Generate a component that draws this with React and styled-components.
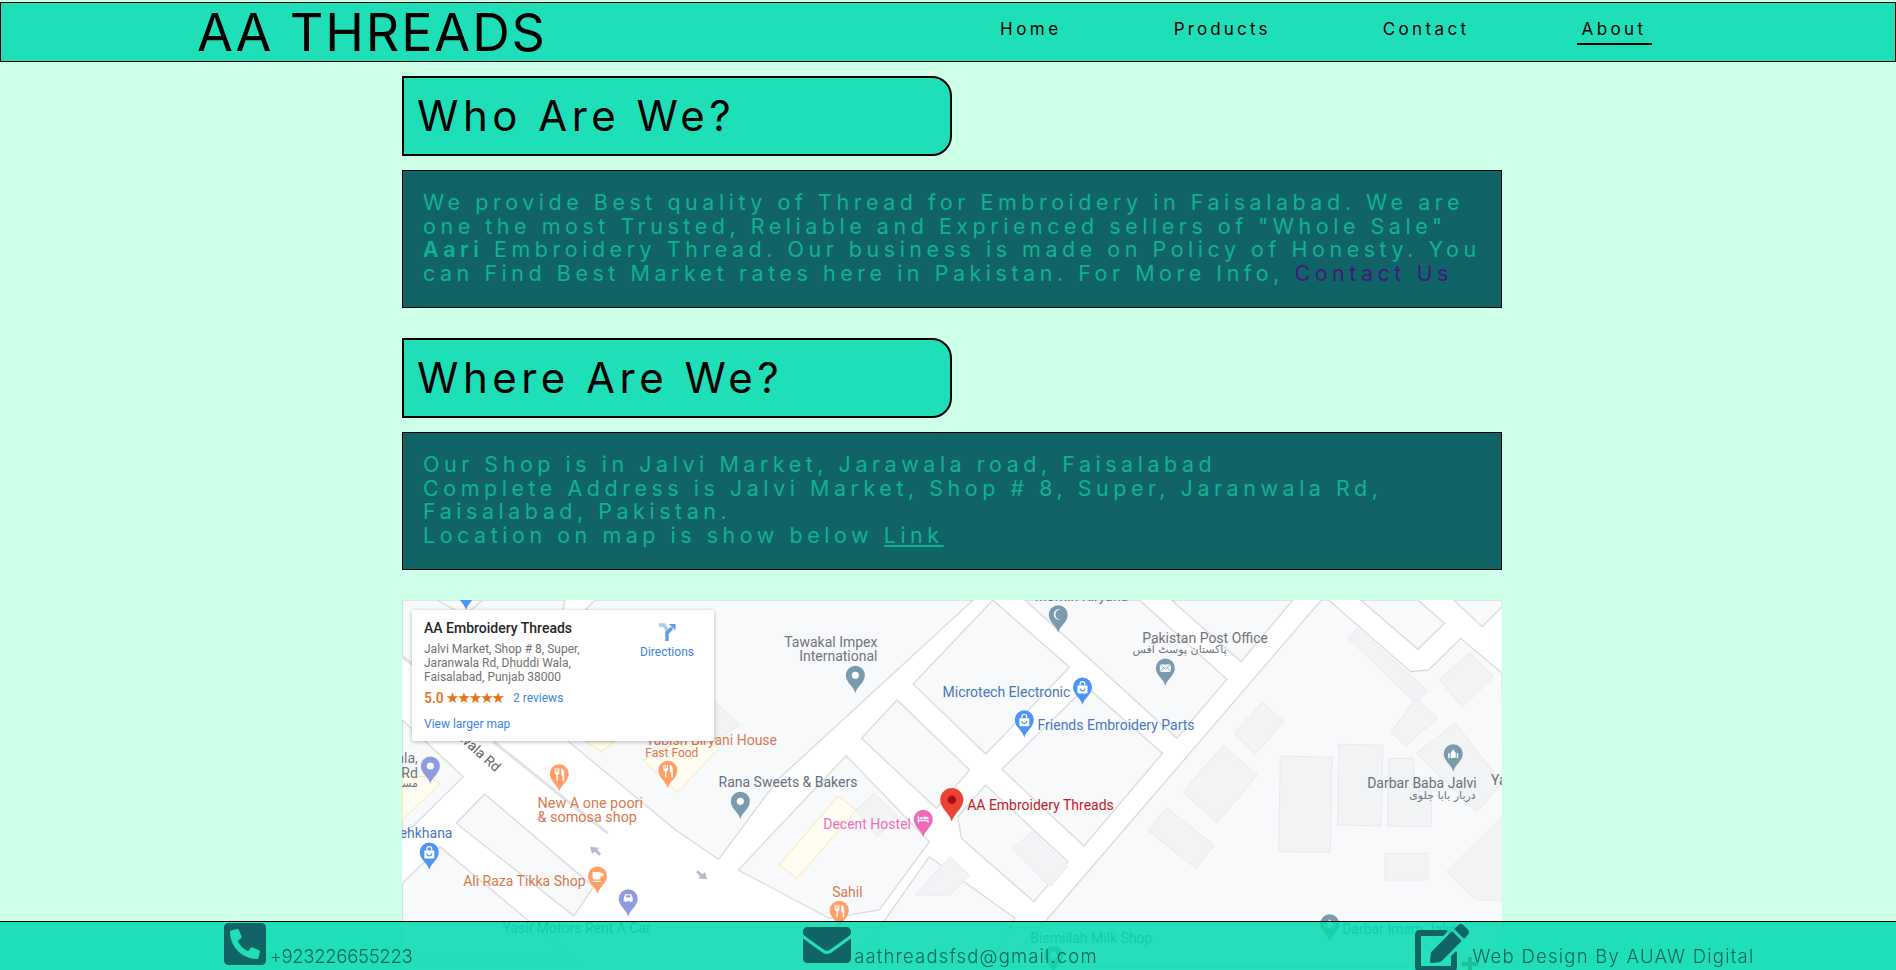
import React from "react";
import styled, { createGlobalStyle } from "styled-components";
import { FaPhoneSquareAlt, FaEnvelope, FaEdit } from "react-icons/fa";

const Global = createGlobalStyle`
  html, body { margin: 0; padding: 0; height: 100%; overflow: hidden; background: #ceffe9; }
  body { font-family: Inter, "Liberation Sans", sans-serif; }
  * { box-sizing: border-box; }
`;

const Header = styled.header`
  margin-top: 2px;
  height: 60px;
  display: flex;
  align-items: flex-start;
  background: #1fdfb8;
  border: 1px solid #000;
`;
const Logo = styled.div`
  width: 994px;
  padding-left: 196px;
  font-size: 52px;
  line-height: 50px;
  padding-top: 5px;
  letter-spacing: 1.9px;
  color: #000;
  white-space: nowrap;
`;
const Nav = styled.nav`
  display: flex;
  gap: 102px;
  padding-top: 14px;
`;
const NavItem = styled.a`
  padding: 0 5px 2px;
  font-size: 17px;
  line-height: 24px;
  letter-spacing: ${(p) => p.$ls}px;
  color: #000;
  white-space: nowrap;
  border-bottom: 2px solid ${(p) => (p.$active ? "#000" : "transparent")};
`;
const Main = styled.main`
  width: 1100px;
  margin-left: 402px;
`;
const Heading = styled.h1`
  margin: ${(p) => p.$top}px 0 14px;
  width: 550px;
  height: 80px;
  padding: 0 0 2px 13px;
  display: flex;
  align-items: center;
  background: #1fdfb8;
  border: 2px solid #000;
  border-radius: 0 20px 20px 0;
  font-size: 42px;
  font-weight: 400;
  letter-spacing: 4.5px;
  color: #000;
`;
const Para = styled.p`
  margin: 0;
  height: 138px;
  padding: 20px;
  background: #116466;
  border: 1px solid #000;
  font-size: 21.5px;
  line-height: 23.7px;
  letter-spacing: 4.52px;
  color: #11b193;
  white-space: nowrap;
`;
const Strong = styled.b`
  font-weight: 600;
`;
const ContactLink = styled.a`
  color: #3f1a7e;
`;
const PlainLink = styled.a`
  color: inherit;
  text-decoration: underline;
`;
const MapFrame = styled.div`
  position: relative;
  margin-top: 30px;
  width: 1100px;
  height: 400px;
  overflow: hidden;
  background: #fff;
  font-family: Roboto, sans-serif;
`;
const MapArt = styled.svg`
  display: block;
  width: 1100px;
  height: 400px;
`;
const Card = styled.div`
  position: absolute;
  left: 10px;
  top: 10px;
  width: 302px;
  height: 131px;
  padding: 10px 12px;
  background: #fff;
  border-radius: 2px;
  box-shadow: 0 1px 4px rgba(0, 0, 0, 0.28);
  display: grid;
  grid-template-columns: 1fr 70px;
`;
const CardTitle = styled.div`
  font-size: 14px;
  font-weight: 500;
  line-height: 17px;
  color: #262626;
`;
const CardAddress = styled.div`
  margin-top: 5px;
  font-size: 12px;
  line-height: 14px;
  color: #717171;
`;
const Rating = styled.div`
  margin-top: 5px;
  display: flex;
  align-items: center;
  gap: 2px;
  height: 18px;
  font-size: 14px;
  font-weight: 500;
  color: #e7711b;
`;
const Stars = styled.span`
  font-size: 15px;
  letter-spacing: -2px;
  margin-right: 1px;
  font-family: "DejaVu Sans", sans-serif;
`;
const CardLink = styled.a`
  font-size: 12px;
  font-weight: 400;
  color: #3a84df;
  margin-left: ${(p) => p.$ml || 0}px;
`;
const LargerMap = styled.div`
  margin-top: 9px;
  line-height: 14px;
`;
const Directions = styled.div`
  display: flex;
  flex-direction: column;
  align-items: center;
  gap: 3px;
  font-size: 12px;
  color: #3a84df;
  padding-top: 3px;
`;
const Footer = styled.footer`
  position: fixed;
  left: 0;
  right: 0;
  bottom: 0;
  height: 49px;
  display: grid;
  grid-template-columns: repeat(3, 1fr);
  background: rgba(5, 218, 175, 0.87);
  border-top: 1px solid #000;
  color: #116466;
`;
const FooterCell = styled.div`
  position: relative;
  display: flex;
  justify-content: center;
  align-items: flex-end;
  gap: ${(p) => p.$gap}px;
  padding-left: ${(p) => p.$pl || 0}px;
  height: 48px;
  font-size: 18.5px;
  font-weight: 300;
  line-height: 24px;
  white-space: nowrap;
`;
const FooterIcon = styled.span`
  display: flex;
  color: #116466;
  font-size: ${(p) => p.$size}px;
  margin-bottom: ${(p) => p.$mb}px;
  height: ${(p) => p.$size}px;
`;
const FooterText = styled.span`
  letter-spacing: ${(p) => p.$ls}px;
  margin-bottom: 2px;
`;
const Plus = styled.span`
  position: absolute;
  left: 198px;
  bottom: -1px;
  width: 16px;
  height: 14px;
  background:
    linear-gradient(#1cbf93, #1cbf93) center / 16px 4px no-repeat,
    linear-gradient(#1cbf93, #1cbf93) center / 4px 14px no-repeat;
`;

const X = (z) => z / 2.8 - 12;
const Y = (z) => z / 3 - 10;
const pts = (a) => a.map(([x, y]) => `${X(x).toFixed(1)},${Y(y).toFixed(1)}`).join(" ");

const BLOCKS = [
  [[575, 30], [470, 140], [500, 455], [800, 720], [920, 808], [1085, 570], [1633, 30]],
  [[1688, 30], [1903, 232], [1668, 492], [1465, 282]],
  [[1713, 538], [1950, 290], [2163, 490], [1943, 768]],
  [[1778, 30], [2203, 445], [2343, 268], [2098, 30]],
  [[2188, 30], [2383, 215], [2528, 30]],
  [[1420, 330], [1320, 445], [1530, 655], [1623, 540]],
  [[35, 390], [205, 560], [35, 740]],
  [[265, 612], [570, 890], [515, 978], [185, 700]],
  [[35, 880], [140, 770], [520, 1110], [35, 1110]],
  [[1277, 497], [975, 840], [1230, 985], [1370, 960], [1510, 755]],
  [[1668, 585], [1898, 815], [1803, 935], [1600, 745], [1590, 680]],
  [[1510, 800], [1750, 985], [1680, 1120], [1300, 1120]],
  [[35, 30], [35, 200], [300, 440], [470, 440], [470, 140], [490, 30]],
  [[2608, 30], [1838, 990], [1720, 1130], [3120, 1130], [3114, 250], [2998, 145], [2908, 240], [2858, 245], [2628, 30]],
  [[2718, 30], [2878, 178], [2953, 100], [2878, 30]],
  [[2978, 30], [3058, 110], [3114, 50], [3114, 30]],
  [[130, 30], [210, 75], [260, 30]],
];
const HOUSES = [
  [[2493, 498], [2638, 502], [2633, 787], [2488, 785]],
  [[2656, 463], [2780, 466], [2776, 708], [2653, 705]],
  [[2796, 505], [2866, 505], [2868, 555], [2916, 600], [2916, 710], [2793, 708]],
  [[2786, 790], [2906, 790], [2906, 870], [2786, 870]],
  [[2443, 337], [2503, 395], [2423, 492], [2363, 430]],
  [[2333, 467], [2428, 555], [2316, 698], [2220, 605]],
  [[2173, 653], [2308, 765], [2256, 835], [2123, 722]],
  [[2683, 145], [2708, 115], [2906, 303], [2873, 340]],
  [[2803, 425], [2873, 325], [2933, 385], [2843, 467]],
  [[2938, 270], [3023, 188], [3090, 260], [3003, 350]],
  [[2983, 400], [2873, 490], [3043, 665], [3114, 580]],
  [[2958, 845], [3114, 680], [3114, 930], [3040, 930]],
  [[1305, 660], [1355, 610], [1420, 675], [1365, 740]],
  [[1743, 775], [1800, 725], [1898, 830], [1848, 890]],
  [[1470, 915], [1568, 800], [1623, 855], [1568, 915]],
  [[905, 330], [980, 405], [905, 455]],
];
const YELLOW = [
  [[708, 510], [805, 607], [920, 475], [850, 430]],
  [[1090, 825], [1140, 865], [1305, 660], [1255, 618]],
  [[550, 455], [592, 485], [630, 455]],
  [[35, 560], [105, 560], [140, 580], [35, 690]],
];
const LABELS = [
  ["Tawakal Impex", 1365, 170, "#70757a", "end"],
  ["International", 1365, 212, "#70757a", "end"],
  ["Rana Sweets & Bakers", 920, 590, "#66717b"],
  ["New A one poori", 413, 653, "#d67a50", "start", 14.4],
  ["& somosa shop", 413, 695, "#d67a50", "start", 14.4],
  ["Tabish Biryani House", 717, 465, "#d67a50"],
  ["Fast Food", 715, 500, "#d67a50", "start", 12],
  ["Ali Raza Tikka Shop", 205, 888, "#d67a50"],
  ["Sahil", 1238, 920, "#d67a50"],
  ["Decent Hostel", 1213, 717, "#ee6fb8"],
  ["AA Embroidery Threads", 1616, 660, "#c5221f"],
  ["Microtech Electronic", 1905, 320, "#4a77bd", "end"],
  ["Friends Embroidery Parts", 1813, 420, "#4a77bd"],
  ["Pakistan Post Office", 2106, 158, "#70757a"],
  ["پاکستان پوسٹ آفس", 2343, 190, "#70757a", "end", 11],
  ["Darbar Baba Jalvi", 2736, 593, "#66717b"],
  ["دربار بابا جلوی", 3040, 628, "#70757a", "end", 11],
  ["Yasir Motors Rent A Car", 315, 1030, "#70757a"],
  ["Bismillah Milk Shop", 1793, 1060, "#70757a"],
  ["Darbar Imam Jalvi", 2666, 1032, "#70757a"],
  ["Momin Kiryana", 1805, 33, "#66717b"],
  ["Ya", 3083, 585, "#66717b"],
  ["Mehkhana", 175, 745, "#4a77bd", "end"],
  ["Jala,", 78, 520, "#70757a", "end"],
  ["Rd", 78, 563, "#70757a", "end"],
  ["مسلم", 78, 592, "#70757a", "end", 11],
];
const PINS = [
  [213, 60, "#4c94f5", "bag"],
  [1303, 310, "#7a9bad", "dot"],
  [981, 688, "#7a9bad", "dot"],
  [474, 605, "#ff9e67", "food"],
  [778, 595, "#ff9e67", "food"],
  [113, 582, "#8e9be0", "dot"],
  [110, 840, "#4c94f5", "bag"],
  [581, 912, "#ff9e67", "cup"],
  [667, 980, "#8e9be0", "car"],
  [1258, 1015, "#ff9e67", "food"],
  [1493, 742, "#ec6ab8", "bed"],
  [1871, 128, "#7a9bad", "moon"],
  [2171, 288, "#7a9bad", "mail"],
  [1939, 345, "#4c94f5", "bag"],
  [1776, 443, "#4c94f5", "bag"],
  [2977, 545, "#7a9bad", "mosque"],
  [2631, 1055, "#7a9bad", "mosque"],
  [1858, 1150, "#7a9bad", "dot"],
];

function Glyph({ kind }) {
  switch (kind) {
    case "bag":
      return (
        <g>
          <path d="M-5 -19.5h10v7a1 1 0 0 1-1 1h-8a1 1 0 0 1-1-1z" fill="#fff" />
          <path d="M-2.4 -19.5v-1.5a2.4 2.4 0 0 1 4.8 0v1.5" fill="none" stroke="#fff" strokeWidth="1.2" />
          <path d="M-2.4 -16.6a2.4 2.4 0 0 0 4.8 0" fill="none" stroke="#4c94f5" strokeWidth="1.1" />
        </g>
      );
    case "food":
      return <path d="M-4.5 -23.5v4.5c0 1.4 .7 2 1.6 2.2V-11h1.4v-5.8c.9-.2 1.6-.8 1.6-2.2v-4.5h-1v4h-.8v-4h-1v4h-.8v-4zM2 -23.5c2 .5 3 2.4 3 5v7.5H3.4v-5H2z" fill="#fff" />;
    case "cup":
      return <path d="M-5 -22h8v5a2.6 2.6 0 0 1-2.6 2.6H-2.4A2.6 2.6 0 0 1-5-17zM3 -21h1.5a1.8 1.8 0 0 1 0 3.6H3zM-5.5 -13.2h9.5v1h-9.5z" fill="#fff" />;
    case "car":
      return <path d="M-4.5 -15.5v-3.5l1.5-3.5h6l1.5 3.5v3.5h-1.4v1.2h-1.3v-1.2h-3.6v1.2h-1.3v-1.2zM-2.6 -19.5h5.2l-.8-2h-3.6z" fill="#fff" />;
    case "bed":
      return <path d="M-5.5 -14.5v-7h1.2v4.2h9.8v2.8h-1.2v-1.5h-8.6v1.5zM-3.6 -20h3.2v2h-3.2zM.2 -20.5h4a1.2 1.2 0 0 1 1.2 1.2v1.3H.2z" fill="#fff" />;
    case "moon":
      return <path d="M2.5 -23.5a5.5 5.5 0 1 0 0 10.6a4.5 4.5 0 1 1 0-10.6z" fill="#fff" />;
    case "mail":
      return (
        <g>
          <rect x="-5.5" y="-21.5" width="11" height="7.5" fill="#fff" />
          <path d="M-5.5 -21.5L0 -17l5.5-4.5M-5.5 -14l3.5-4.5M5.5 -14L2 -18.5" fill="none" stroke="#7a9bad" strokeWidth=".8" />
        </g>
      );
    case "mosque":
      return <path d="M-5 -13.5v-5h1.5v5zM3.5 -13.5v-5H5v5zM-2.5 -13.5v-5.5l2.5-3.5l2.5 3.5v5z" fill="#fff" />;
    default:
      return <circle cx="0" cy="-18" r="3.6" fill="#fff" />;
  }
}

function Pin({ x, y, color, kind }) {
  return (
    <g transform={`translate(${X(x)} ${Y(y)})`}>
      <path d="M0 0C-1.5-7-9.5-10.5-9.5-18A9.5 9.5 0 1 1 9.5-18C9.5-10.5 1.5-7 0 0Z" fill={color} />
      <Glyph kind={kind} />
    </g>
  );
}

function GoogleMap() {
  return (
    <MapArt viewBox="0 0 1100 400">
      <rect width="1100" height="400" fill="#fff" />
      {BLOCKS.map((b, i) => (
        <polygon key={i} points={pts(b)} fill="#f8f9fb" stroke="#d9dbdf" strokeWidth="1.3" />
      ))}
      {HOUSES.map((b, i) => (
        <polygon key={i} points={pts(b)} fill="#f1f3f4" stroke="#e8eaed" strokeWidth="1" />
      ))}
      {YELLOW.map((b, i) => (
        <polygon key={i} points={pts(b)} fill="#fffcf2" stroke="#fde5ad" strokeWidth="1" />
      ))}
      <line x1={X(290)} y1={Y(455)} x2={X(610)} y2={Y(730)} stroke="#e0e2e6" strokeWidth="3" />
      <line x1={X(35)} y1={Y(200)} x2={X(110)} y2={Y(262)} stroke="#e0e2e6" strokeWidth="3" />
      <path d={`M${X(560)} ${Y(770)}l9 1-2 2 4 4-2 2-4-4-3 2z`} fill="#b4bcd0" />
      <path d={`M${X(888)} ${Y(868)}l-9-1 2-2-4-4 2-2 4 4 3-2z`} fill="#b4bcd0" />
      <text x={X(295)} y={Y(548)} fontSize="14" fill="#5f6368" textAnchor="end" transform={`rotate(42 ${X(295)} ${Y(548)})`}>Jaranwala Rd</text>
      {LABELS.map(([t, x, y, c, a, s], i) => (
        <text key={i} x={X(x)} y={Y(y)} fill={c} fontSize={s || 14} textAnchor={a || "start"} fontFamily={/[\u0600-\u06ff]/.test(t) ? "'DejaVu Sans', sans-serif" : "Roboto, sans-serif"}>{t}</text>
      ))}
      {PINS.map(([x, y, c, k], i) => (
        <Pin key={i} x={x} y={y} color={c} kind={k} />
      ))}
      <g transform={`translate(${X(1573)} ${Y(695)}) scale(1.22)`}>
        <path d="M0 0C-1.5-7-9.5-10.5-9.5-18A9.5 9.5 0 1 1 9.5-18C9.5-10.5 1.5-7 0 0Z" fill="#ea4335" />
        <circle cx="0" cy="-18" r="3.4" fill="#a50e0e" />
      </g>
    </MapArt>
  );
}

export default function App() {
  return (
    <>
      <Global />
      <Header>
        <Logo>AA THREADS</Logo>
        <Nav>
          <NavItem $ls={3.5}>Home</NavItem>
          <NavItem $ls={3.16}>Products</NavItem>
          <NavItem $ls={3.4}>Contact</NavItem>
          <NavItem $active $ls={3.4}>About</NavItem>
        </Nav>
      </Header>
      <Main>
        <Heading $top={14}>Who Are We?</Heading>
        <Para>
          We provide Best quality of Thread for Embroidery in Faisalabad. We are<br />
          one the most Trusted, Reliable and Exprienced sellers of "Whole Sale"<br />
          <Strong>Aari</Strong> Embroidery Thread. Our business is made on Policy of Honesty. You<br />
          can Find Best Market rates here in Pakistan. For More Info, <ContactLink>Contact Us</ContactLink>
        </Para>
        <Heading $top={30}>Where Are We?</Heading>
        <Para>
          Our Shop is in Jalvi Market, Jarawala road, Faisalabad<br />
          Complete Address is Jalvi Market, Shop # 8, Super, Jaranwala Rd,<br />
          Faisalabad, Pakistan.<br />
          Location on map is show below <PlainLink>Link</PlainLink>
        </Para>
        <MapFrame>
          <GoogleMap />
          <Card>
            <div>
              <CardTitle>AA Embroidery Threads</CardTitle>
              <CardAddress>
                Jalvi Market, Shop # 8, Super,<br />
                Jaranwala Rd, Dhuddi Wala,<br />
                Faisalabad, Punjab 38000
              </CardAddress>
              <Rating>
                5.0 <Stars>★★★★★</Stars>
                <CardLink $ml={7}>2 reviews</CardLink>
              </Rating>
              <LargerMap>
                <CardLink>View larger map</CardLink>
              </LargerMap>
            </div>
            <Directions>
              <svg width="18" height="19" viewBox="0 0 18 19">
                <path d="M1 2l5 0 3 5v4" fill="none" stroke="#a9caf2" strokeWidth="3.4" />
                <path d="M9 18v-8l5-5" fill="none" stroke="#5f9be6" strokeWidth="3.4" />
                <path d="M11 1h6.5v6.5z" fill="#5f9be6" />
              </svg>
              Directions
            </Directions>
          </Card>
        </MapFrame>
      </Main>
      <Footer>
        <FooterCell $pl={1} $gap={1}>
          <FooterIcon $size={48} $mb={2}><FaPhoneSquareAlt /></FooterIcon>
          <FooterText $ls={-0.3}>+923226655223</FooterText>
        </FooterCell>
        <FooterCell $pl={5} $gap={3}>
          <FooterIcon $size={48} $mb={1}><FaEnvelope /></FooterIcon>
          <FooterText $ls={1.15}>aathreadsfsd@gmail.com</FooterText>
        </FooterCell>
        <FooterCell $pl={10} $gap={3}>
          <FooterIcon $size={54} $mb={-5}><FaEdit /></FooterIcon>
          <FooterText $ls={1.25}>Web Design By AUAW Digital</FooterText>
          <Plus />
        </FooterCell>
      </Footer>
    </>
  );
}
